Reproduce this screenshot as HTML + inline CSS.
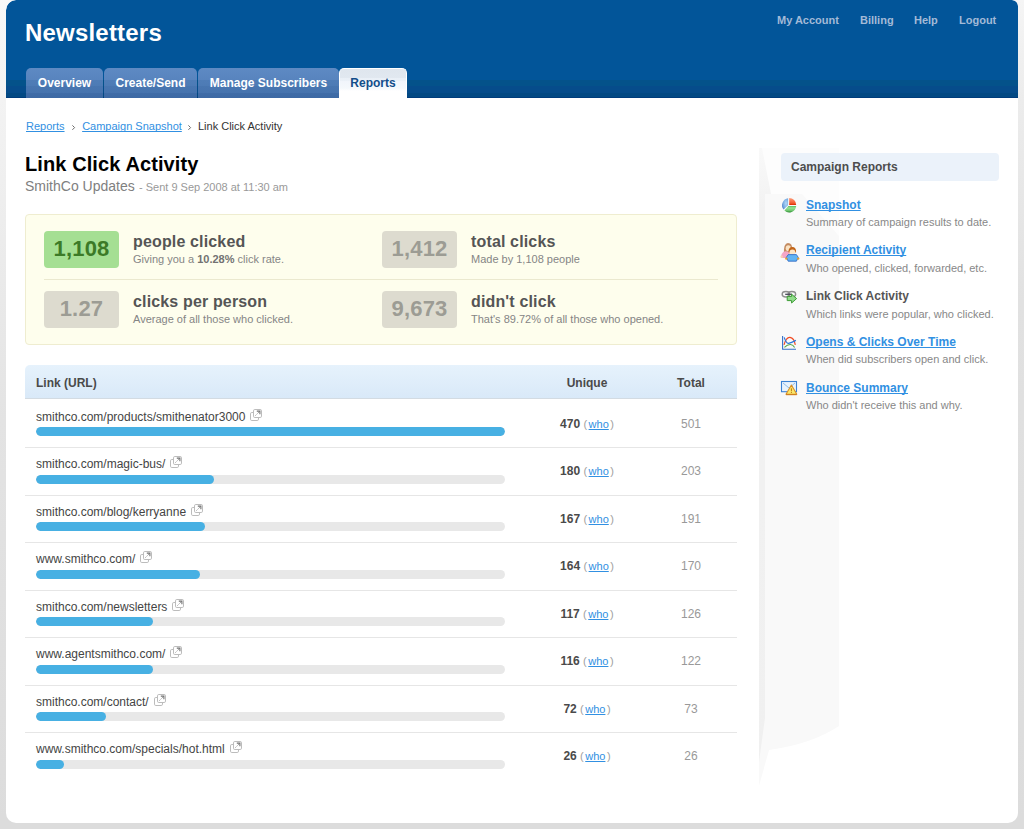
<!DOCTYPE html>
<html><head><meta charset="utf-8">
<style>
*{box-sizing:border-box;margin:0;padding:0}
html,body{width:1024px;height:829px;overflow:hidden}
body{font-family:"Liberation Sans",sans-serif;background:linear-gradient(#f8f8f8,#eeeeee 200px,#e3e3e3 420px,#dcdcdc 829px);position:relative;color:#333}
.abs{position:absolute;white-space:nowrap;line-height:20px}
#shadowR{position:absolute;left:1008px;top:0;width:16px;height:829px;background:linear-gradient(#f5f5f5,#ececec 100px,#e1e1e1 300px,#dcdcdc 829px)}
#shadowB{position:absolute;left:0;top:813px;width:1024px;height:16px;background:#dcdcdc}
#card{position:absolute;left:6px;top:0;width:1012px;height:823px;background:#fff;border-radius:10px 6px 10px 10px;overflow:hidden}
#hdr{position:absolute;left:0;top:0;width:1012px;height:98px;border-radius:10px 6px 0 0;
 background:linear-gradient(#025599 0,#025599 80px,#04528a 80px,#04528a 86px,#064c8b 86px,#064c8b 93px,#034983 93px,#034983 97px,#003c7c 97px,#003c7c 98px)}
#logo{left:19px;top:18px;font-size:24px;font-weight:bold;color:#fff;line-height:30px;letter-spacing:.2px}
.tnav{top:13px;font-size:11px;font-weight:bold;color:#a3bad7;line-height:14px}
.tab{position:absolute;top:68px;height:30px;border-radius:5px 5px 0 0;font-size:12px;font-weight:bold;color:#fff;text-align:center;line-height:30px;
 background:linear-gradient(#5e8ac3 0,#5884be 12px,#4f7db7 12px,#4d7bb5 18px,#4876b0 18px,#4673ae 25px,#3f6ca7 25px,#3d69a4 30px)}
.tab.on{background:linear-gradient(#dfe6ee 0,#e1e8f0 9px,#e9eff6 9px,#ebf1f8 12px,#f1f5fb 12px,#f4f8fc 19px,#fff 22px);color:#134e8a;border:1px solid #fff;border-bottom:0;line-height:29px}
a{color:#3190e2;text-decoration:underline;text-decoration-skip-ink:none}
#side1{position:absolute;left:759px;top:148px;width:7px;height:610px;background:linear-gradient(#fafafa,#f1f1f1 60px,#f1f1f1 560px,#fbfbfb)}
#side2{position:absolute;left:766px;top:148px;width:73px;height:574px;background:linear-gradient(#fdfdfd,#f8f8f8 80px,#f8f8f8);border-bottom-left-radius:80px 30px}
#side3{position:absolute;left:839px;top:148px;width:179px;height:640px;background:linear-gradient(#fefefe,#fcfcfc)}
.bc{font-size:11px;top:116px}
.sep{color:#777;font-size:11px;display:inline-block;text-align:center;position:relative;top:0px}
#h1{left:25px;top:154px;font-size:20px;font-weight:bold;color:#000;letter-spacing:.1px}
#sub{left:25px;top:176px;font-size:14px;color:#808080}
#sent{left:139px;top:177px;font-size:11px;color:#999}
#stats{position:absolute;left:25px;top:214px;width:712px;height:131px;background:#fefeed;border:1px solid #efedd0;border-radius:4px}
.badge{position:absolute;width:75px;height:37px;border-radius:4px;background:#dddbcf;color:#9c9c94;font-size:22px;font-weight:bold;text-align:center;line-height:35px;letter-spacing:.2px}
.badge.g{background:#a5df93;color:#3c7a27}
.st{font-size:16px;font-weight:bold;color:#555;letter-spacing:.15px}
.ss{font-size:11px;color:#858585}
.ss b{color:#727272}
#divl{position:absolute;left:44px;top:279px;width:674px;height:1px;background:#ebe9cf}
#thead{position:absolute;left:25px;top:365px;width:712px;height:34px;border-radius:5px 5px 0 0;background:linear-gradient(#e6f2fc,#d9e9f8);border-bottom:1px solid #d3dbe2}
.th{font-size:12px;font-weight:bold;color:#4a4a4a;top:373px}
.url{font-size:12px;color:#444}
.ext{position:relative;top:-3px;margin-left:4px;vertical-align:middle}
.track{position:absolute;left:36px;width:469px;height:9px;border-radius:5px;background:#e8e8e8;overflow:hidden}
.fill{height:9px;border-radius:5px;background:#47b0e3}
.uniq{font-size:12px;color:#444;text-align:center}
.uniq b{color:#4a4a4a}
.uniq a{font-size:11px}
.par{color:#a0a0a0;font-size:11px}
.tot{font-size:12px;color:#999;text-align:center}
.hr{position:absolute;left:25px;width:712px;height:1px;background:#e6e6e6}
#shead{position:absolute;left:781px;top:153px;width:218px;height:28px;border-radius:4px;background:#ebf2fa}
.stitle{font-size:12px;font-weight:bold}
.stitle.cur{color:#555}
.sdesc{font-size:11px;color:#888}
</style></head><body>
<div id="shadowR"></div><div id="shadowB"></div>
<div id="card">
 <div id="hdr">
  <div class="abs" id="logo">Newsletters</div>
  <div class="abs tnav" style="left:771px">My Account</div>
  <div class="abs tnav" style="left:854px">Billing</div>
  <div class="abs tnav" style="left:908px">Help</div>
  <div class="abs tnav" style="left:953px">Logout</div>
  <div class="tab" style="left:20px;width:77px">Overview</div>
  <div class="tab" style="left:98px;width:93px">Create/Send</div>
  <div class="tab" style="left:192px;width:141px">Manage Subscribers</div>
  <div class="tab on" style="left:333px;width:68px">Reports</div>
 </div>
</div>
<svg style="position:absolute;left:0;top:0" width="1024" height="829"><defs><linearGradient id="stripg" x1="0" y1="0" x2="0" y2="1"><stop offset="0" stop-color="#f9f9f9"/><stop offset=".1" stop-color="#f2f2f2"/><stop offset="1" stop-color="#f0f0f0"/></linearGradient></defs>
<path d="M759 148 H839 V726 Q812 744 769 750 L759 786 Z" fill="#f9f9f9"/>
<path d="M761 148 H839 V236 L802 194 H771 Z" fill="#fdfdfd"/>
<path d="M759 148 H762 L771 194 H765 V718 L759 762 Z" fill="url(#stripg)"/></svg>

<div class="abs bc" style="left:26px"><a>Reports</a><span class="sep" style="width:17.6px"></span><a>Campaign Snapshot</a><span class="sep" style="width:16.2px"></span>Link Click Activity</div>
<svg style="position:absolute;left:0;top:0" width="220" height="140"><path d="M72.4 125.4 L74.6 127.6 L72.4 129.8 M188.4 125.4 L190.6 127.6 L188.4 129.8" fill="none" stroke="#6a6a6a" stroke-width="1"/></svg>
<div class="abs" id="h1">Link Click Activity</div>
<div class="abs" id="sub">SmithCo Updates</div>
<div class="abs" id="sent">- Sent 9 Sep 2008 at 11:30 am</div>

<div id="stats"></div>
<div class="badge g" style="left:44px;top:231px">1,108</div>
<div class="abs st" style="left:133px;top:232px">people clicked</div>
<div class="abs ss" style="left:133px;top:249px">Giving you a <b>10.28%</b> click rate.</div>
<div class="badge" style="left:382px;top:231px">1,412</div>
<div class="abs st" style="left:471px;top:232px">total clicks</div>
<div class="abs ss" style="left:471px;top:249px">Made by 1,108 people</div>
<div id="divl"></div>
<div class="badge" style="left:44px;top:291px">1.27</div>
<div class="abs st" style="left:133px;top:292px">clicks per person</div>
<div class="abs ss" style="left:133px;top:309px">Average of all those who clicked.</div>
<div class="badge" style="left:382px;top:291px">9,673</div>
<div class="abs st" style="left:471px;top:292px">didn't click</div>
<div class="abs ss" style="left:471px;top:309px">That's 89.72% of all those who opened.</div>

<div id="thead"></div>
<div class="abs th" style="left:36px">Link (URL)</div>
<div class="abs th" style="left:537px;width:100px;text-align:center">Unique</div>
<div class="abs th" style="left:645px;width:92px;text-align:center">Total</div>

 <div class="abs url" style="left:36px;top:407px">smithco.com/products/smithenator3000<svg class="ext" width="14" height="14" viewBox="0 0 14 14"><rect x="1.5" y="4.5" width="8" height="8" rx="1.3" fill="#fff" stroke="#bcbcbc"/><rect x="4.5" y="1.5" width="8" height="8" rx="1.3" fill="#fff" stroke="#bcbcbc"/><path d="M6.5 7.5 L10.5 3.5" stroke="#888" stroke-width="1" stroke-dasharray="1 .8"/><path d="M7.8 3.1 H10.9 V6.2" fill="none" stroke="#707070" stroke-width="1.1"/></svg></div>
 <div class="track" style="top:427.0px"><div class="fill" style="width:469.0px"></div></div>
 <div class="abs uniq" style="left:537px;width:100px;top:414px"><b>470</b> <span class="par" style="margin:0 1.5px 0 0">(</span><a>who</a><span class="par" style="margin:0 0 0 1.5px">)</span></div>
 <div class="abs tot" style="left:645px;width:92px;top:414px">501</div>
 <div class="hr" style="top:447px"></div>
 <div class="abs url" style="left:36px;top:454px">smithco.com/magic-bus/<svg class="ext" width="14" height="14" viewBox="0 0 14 14"><rect x="1.5" y="4.5" width="8" height="8" rx="1.3" fill="#fff" stroke="#bcbcbc"/><rect x="4.5" y="1.5" width="8" height="8" rx="1.3" fill="#fff" stroke="#bcbcbc"/><path d="M6.5 7.5 L10.5 3.5" stroke="#888" stroke-width="1" stroke-dasharray="1 .8"/><path d="M7.8 3.1 H10.9 V6.2" fill="none" stroke="#707070" stroke-width="1.1"/></svg></div>
 <div class="track" style="top:474.5px"><div class="fill" style="width:178.2px"></div></div>
 <div class="abs uniq" style="left:537px;width:100px;top:461px"><b>180</b> <span class="par" style="margin:0 1.5px 0 0">(</span><a>who</a><span class="par" style="margin:0 0 0 1.5px">)</span></div>
 <div class="abs tot" style="left:645px;width:92px;top:461px">203</div>
 <div class="hr" style="top:495px"></div>
 <div class="abs url" style="left:36px;top:502px">smithco.com/blog/kerryanne<svg class="ext" width="14" height="14" viewBox="0 0 14 14"><rect x="1.5" y="4.5" width="8" height="8" rx="1.3" fill="#fff" stroke="#bcbcbc"/><rect x="4.5" y="1.5" width="8" height="8" rx="1.3" fill="#fff" stroke="#bcbcbc"/><path d="M6.5 7.5 L10.5 3.5" stroke="#888" stroke-width="1" stroke-dasharray="1 .8"/><path d="M7.8 3.1 H10.9 V6.2" fill="none" stroke="#707070" stroke-width="1.1"/></svg></div>
 <div class="track" style="top:522.0px"><div class="fill" style="width:168.8px"></div></div>
 <div class="abs uniq" style="left:537px;width:100px;top:509px"><b>167</b> <span class="par" style="margin:0 1.5px 0 0">(</span><a>who</a><span class="par" style="margin:0 0 0 1.5px">)</span></div>
 <div class="abs tot" style="left:645px;width:92px;top:509px">191</div>
 <div class="hr" style="top:542px"></div>
 <div class="abs url" style="left:36px;top:549px">www.smithco.com/<svg class="ext" width="14" height="14" viewBox="0 0 14 14"><rect x="1.5" y="4.5" width="8" height="8" rx="1.3" fill="#fff" stroke="#bcbcbc"/><rect x="4.5" y="1.5" width="8" height="8" rx="1.3" fill="#fff" stroke="#bcbcbc"/><path d="M6.5 7.5 L10.5 3.5" stroke="#888" stroke-width="1" stroke-dasharray="1 .8"/><path d="M7.8 3.1 H10.9 V6.2" fill="none" stroke="#707070" stroke-width="1.1"/></svg></div>
 <div class="track" style="top:569.5px"><div class="fill" style="width:164.2px"></div></div>
 <div class="abs uniq" style="left:537px;width:100px;top:556px"><b>164</b> <span class="par" style="margin:0 1.5px 0 0">(</span><a>who</a><span class="par" style="margin:0 0 0 1.5px">)</span></div>
 <div class="abs tot" style="left:645px;width:92px;top:556px">170</div>
 <div class="hr" style="top:590px"></div>
 <div class="abs url" style="left:36px;top:597px">smithco.com/newsletters<svg class="ext" width="14" height="14" viewBox="0 0 14 14"><rect x="1.5" y="4.5" width="8" height="8" rx="1.3" fill="#fff" stroke="#bcbcbc"/><rect x="4.5" y="1.5" width="8" height="8" rx="1.3" fill="#fff" stroke="#bcbcbc"/><path d="M6.5 7.5 L10.5 3.5" stroke="#888" stroke-width="1" stroke-dasharray="1 .8"/><path d="M7.8 3.1 H10.9 V6.2" fill="none" stroke="#707070" stroke-width="1.1"/></svg></div>
 <div class="track" style="top:617.0px"><div class="fill" style="width:117.2px"></div></div>
 <div class="abs uniq" style="left:537px;width:100px;top:604px"><b>117</b> <span class="par" style="margin:0 1.5px 0 0">(</span><a>who</a><span class="par" style="margin:0 0 0 1.5px">)</span></div>
 <div class="abs tot" style="left:645px;width:92px;top:604px">126</div>
 <div class="hr" style="top:637px"></div>
 <div class="abs url" style="left:36px;top:644px">www.agentsmithco.com/<svg class="ext" width="14" height="14" viewBox="0 0 14 14"><rect x="1.5" y="4.5" width="8" height="8" rx="1.3" fill="#fff" stroke="#bcbcbc"/><rect x="4.5" y="1.5" width="8" height="8" rx="1.3" fill="#fff" stroke="#bcbcbc"/><path d="M6.5 7.5 L10.5 3.5" stroke="#888" stroke-width="1" stroke-dasharray="1 .8"/><path d="M7.8 3.1 H10.9 V6.2" fill="none" stroke="#707070" stroke-width="1.1"/></svg></div>
 <div class="track" style="top:664.5px"><div class="fill" style="width:117.2px"></div></div>
 <div class="abs uniq" style="left:537px;width:100px;top:651px"><b>116</b> <span class="par" style="margin:0 1.5px 0 0">(</span><a>who</a><span class="par" style="margin:0 0 0 1.5px">)</span></div>
 <div class="abs tot" style="left:645px;width:92px;top:651px">122</div>
 <div class="hr" style="top:685px"></div>
 <div class="abs url" style="left:36px;top:692px">smithco.com/contact/<svg class="ext" width="14" height="14" viewBox="0 0 14 14"><rect x="1.5" y="4.5" width="8" height="8" rx="1.3" fill="#fff" stroke="#bcbcbc"/><rect x="4.5" y="1.5" width="8" height="8" rx="1.3" fill="#fff" stroke="#bcbcbc"/><path d="M6.5 7.5 L10.5 3.5" stroke="#888" stroke-width="1" stroke-dasharray="1 .8"/><path d="M7.8 3.1 H10.9 V6.2" fill="none" stroke="#707070" stroke-width="1.1"/></svg></div>
 <div class="track" style="top:712.0px"><div class="fill" style="width:70.3px"></div></div>
 <div class="abs uniq" style="left:537px;width:100px;top:699px"><b>72</b> <span class="par" style="margin:0 1.5px 0 0">(</span><a>who</a><span class="par" style="margin:0 0 0 1.5px">)</span></div>
 <div class="abs tot" style="left:645px;width:92px;top:699px">73</div>
 <div class="hr" style="top:732px"></div>
 <div class="abs url" style="left:36px;top:739px">www.smithco.com/specials/hot.html<svg class="ext" width="14" height="14" viewBox="0 0 14 14"><rect x="1.5" y="4.5" width="8" height="8" rx="1.3" fill="#fff" stroke="#bcbcbc"/><rect x="4.5" y="1.5" width="8" height="8" rx="1.3" fill="#fff" stroke="#bcbcbc"/><path d="M6.5 7.5 L10.5 3.5" stroke="#888" stroke-width="1" stroke-dasharray="1 .8"/><path d="M7.8 3.1 H10.9 V6.2" fill="none" stroke="#707070" stroke-width="1.1"/></svg></div>
 <div class="track" style="top:759.5px"><div class="fill" style="width:28.1px"></div></div>
 <div class="abs uniq" style="left:537px;width:100px;top:746px"><b>26</b> <span class="par" style="margin:0 1.5px 0 0">(</span><a>who</a><span class="par" style="margin:0 0 0 1.5px">)</span></div>
 <div class="abs tot" style="left:645px;width:92px;top:746px">26</div>

<div id="shead"></div>
<div class="abs" style="left:791px;top:157px;font-size:12px;font-weight:bold;color:#4d4d4d">Campaign Reports</div>

 <div class="abs" style="left:781px;top:197px;line-height:0"><svg width="16" height="16" viewBox="0 0 16 16"><defs><radialGradient id="gb" cx=".65" cy=".45" r=".8"><stop offset="0" stop-color="#b2d8f8"/><stop offset=".6" stop-color="#74a8e0"/><stop offset="1" stop-color="#3a6cbc"/></radialGradient><linearGradient id="gr" x1="0" y1="0" x2="0" y2="1"><stop offset="0" stop-color="#ff9c78"/><stop offset=".75" stop-color="#f25a30"/><stop offset="1" stop-color="#dd2a00"/></linearGradient><linearGradient id="gg" x1="0" y1="0" x2="0" y2="1"><stop offset="0" stop-color="#5cb85c"/><stop offset=".3" stop-color="#96e496"/><stop offset=".75" stop-color="#6cc46c"/><stop offset="1" stop-color="#2a8a30"/></linearGradient></defs><path d="M8.2 7.9 V1.05 A7 7 0 0 1 15.2 7.9 Z" fill="url(#gr)"/><path d="M7.4 9 H15.2 A7 7 0 0 1 3.4 13.4 Z" fill="url(#gg)"/><path d="M7.1 1.3 V8.3 L2.6 12.6 A7 7 0 0 1 7.1 1.3 Z" fill="url(#gb)"/></svg></div>
 <div class="abs stitle" style="left:806px;top:195px"><a>Snapshot</a></div>
 <div class="abs sdesc" style="left:806px;top:212px">Summary of campaign results to date.</div>
 <div class="abs" style="left:780px;top:242px;line-height:0"><svg width="20" height="20" viewBox="0 0 20 20"><path d="M3.8 12.5 Q3.4 1 8 1 Q12.6 1 12.2 8 L9 12 Z" fill="#c48c62"/><ellipse cx="8.3" cy="6.2" rx="2.6" ry="3" fill="#fbe3c4"/><path d="M1 15.5 Q1.3 9.8 5.5 9.3 L9.5 9.8 L8.5 16 L2 16 Z" fill="#f4a6c6"/><circle cx="1.7" cy="14.8" r="1.3" fill="#f6d2b0"/><path d="M8.5 10.5 Q8.2 5 12.3 5 Q16.4 5 16.1 10.5 Z" fill="#c2661a"/><ellipse cx="12.4" cy="10.2" rx="2.9" ry="2.6" fill="#fde6c6"/><path d="M8.2 12.6 H16.4 L18.3 15.4 L16.4 19.2 H8.2 L6.3 15.4 Z" fill="#62b4f2" stroke="#2a62c0" stroke-width=".8"/><circle cx="6.3" cy="16.6" r="1.2" fill="#e4a032"/><circle cx="18.2" cy="16.6" r="1.2" fill="#e4a032"/></svg></div>
 <div class="abs stitle" style="left:806px;top:240px"><a>Recipient Activity</a></div>
 <div class="abs sdesc" style="left:806px;top:258px">Who opened, clicked, forwarded, etc.</div>
 <div class="abs" style="left:781px;top:290px;line-height:0"><svg width="18" height="18" viewBox="0 0 18 18"><ellipse cx="4.9" cy="4.2" rx="3.7" ry="2.7" fill="none" stroke="#8e8e8e" stroke-width="1.5"/><ellipse cx="10.9" cy="4.2" rx="3.7" ry="2.7" fill="none" stroke="#8e8e8e" stroke-width="1.5"/><path d="M4.2 4.3 H11" stroke="#4a4a5a" stroke-width="1.3"/><path d="M6.2 6.4 H10.6 V4.2 L15.6 8.6 L10.6 13 V10.6 H6.2 Z" fill="#92dc8c" stroke="#3c9c34" stroke-width="1"/></svg></div>
 <div class="abs stitle cur" style="left:806px;top:286px">Link Click Activity</div>
 <div class="abs sdesc" style="left:806px;top:304px">Which links were popular, who clicked.</div>
 <div class="abs" style="left:781px;top:335px;line-height:0"><svg width="16" height="16" viewBox="0 0 16 16"><path d="M1.6 1 V14.3 H15" fill="none" stroke="#3470c8" stroke-width="1.1"/><path d="M3 9.8 Q5.2 2 9 2.4 Q13.2 3 14.3 9.9" fill="none" stroke="#f04a22" stroke-width="1.2"/><path d="M3.2 2.4 Q5.2 8.6 7.6 8.3 Q10 8 14.9 5.4" fill="none" stroke="#2a76dc" stroke-width="1.2"/><path d="M3.4 12.4 Q6.5 9.3 9.5 9.5 Q12.2 9.8 13.6 12.6" fill="none" stroke="#5aa84a" stroke-width="1.1"/></svg></div>
 <div class="abs stitle" style="left:806px;top:332px"><a>Opens &amp; Clicks Over Time</a></div>
 <div class="abs sdesc" style="left:806px;top:349px">When did subscribers open and click.</div>
 <div class="abs" style="left:780px;top:380px;line-height:0"><svg width="18" height="16" viewBox="0 0 18 16"><rect x="1.5" y="1.5" width="15" height="10.2" fill="#e8f3fd" stroke="#3c82d4" stroke-width="1.1"/><path d="M3 3 L9 8 L15 3" fill="none" stroke="#90bce8" stroke-width="1"/><path d="M11.4 5 L16.8 14.3 H6 Z" fill="#fbe86a" stroke="#d8902a" stroke-width="1.1" stroke-linejoin="round"/><path d="M6 14.6 H16.8" stroke="#d08020" stroke-width="1.2"/><rect x="10.9" y="8.3" width="1" height="3" fill="#c07818"/><rect x="10.9" y="12" width="1" height="1" fill="#c07818"/></svg></div>
 <div class="abs stitle" style="left:806px;top:378px"><a>Bounce Summary</a></div>
 <div class="abs sdesc" style="left:806px;top:395px">Who didn't receive this and why.</div>
</body></html>
